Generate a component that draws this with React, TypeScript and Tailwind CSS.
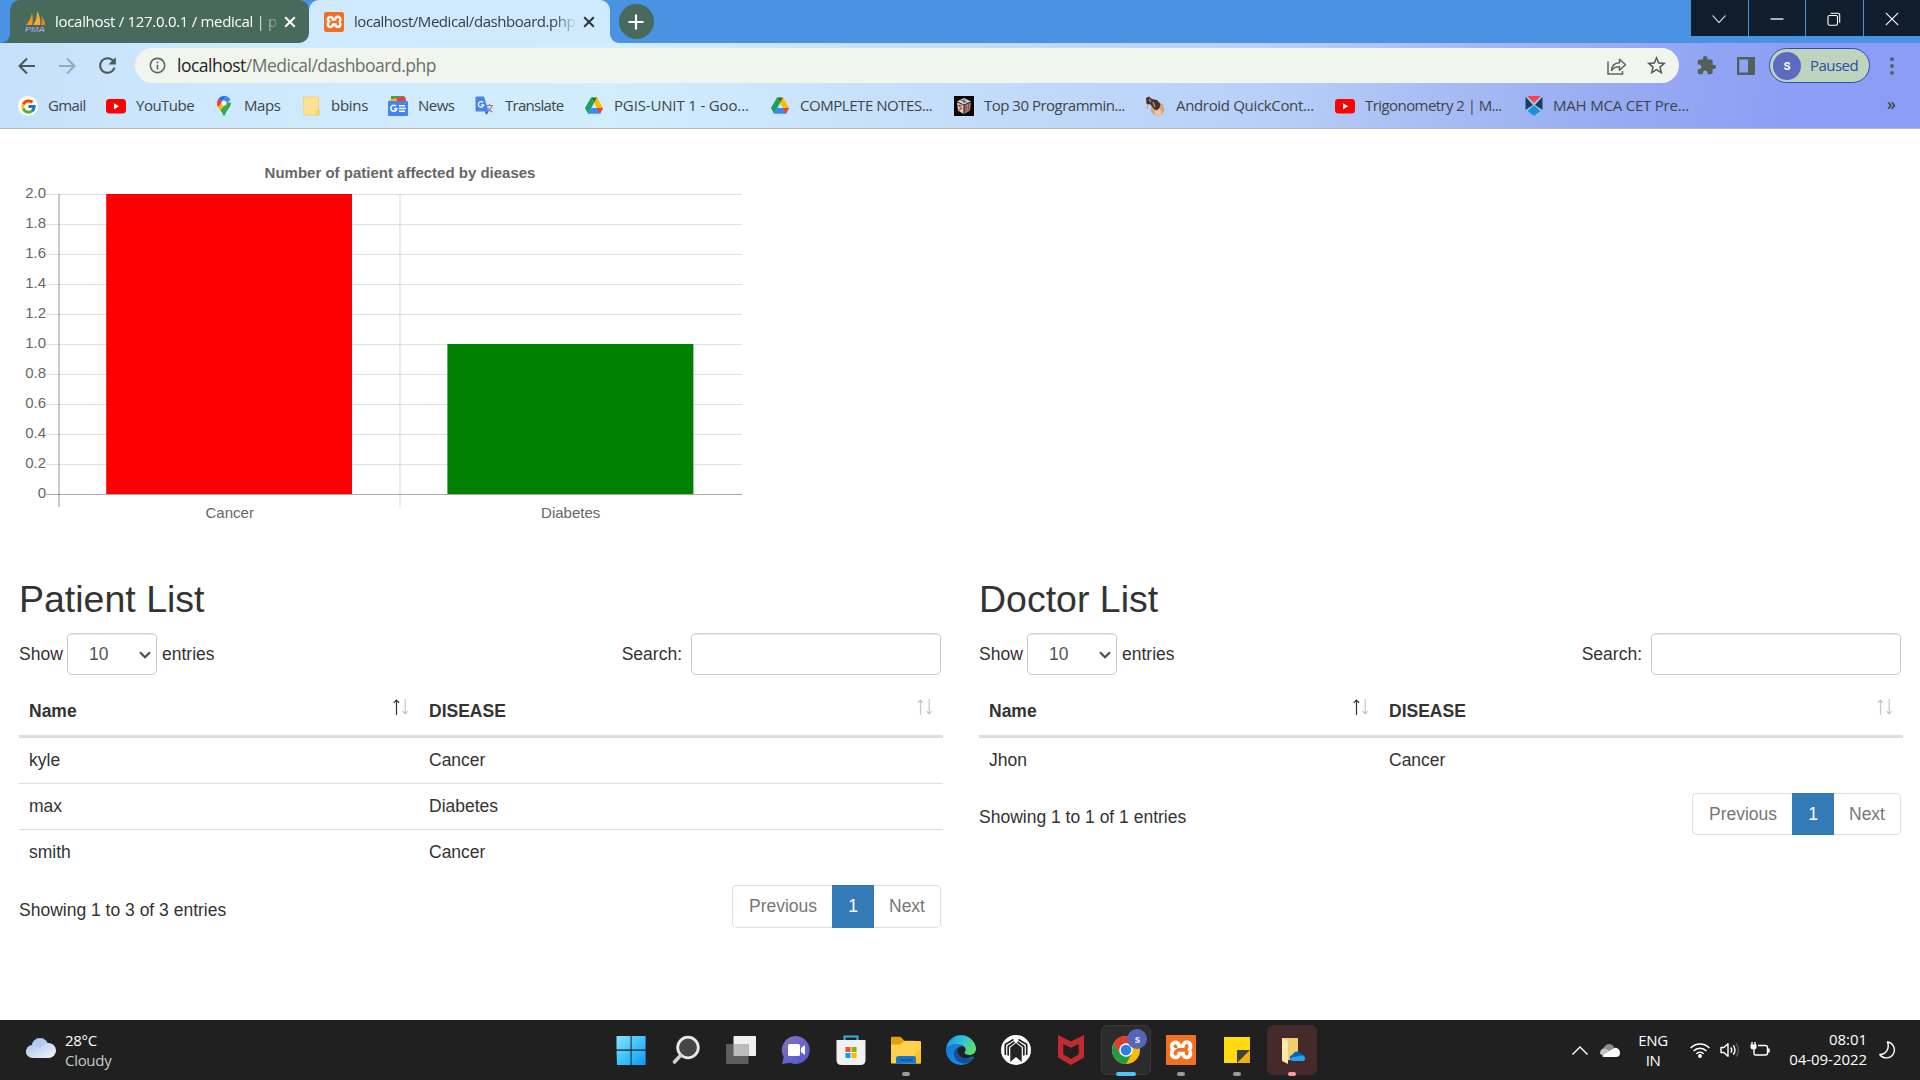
import React from "react";
import { FcGoogle } from "react-icons/fc";
import { SiXampp } from "react-icons/si";
import { MdExtension, MdStarOutline, MdRefresh, MdInfoOutline } from "react-icons/md";

type Row = [string, string];

/* ---------- favicons ---------- */

const Xampp = ({ cls }: { cls: string }) => (
  <span className={`${cls} flex shrink-0 items-center justify-center overflow-hidden rounded-[2px] bg-white`}>
    <SiXampp className="h-full w-full scale-[1.03] text-[#f37021]" />
  </span>
);

const PmaIcon = () => (
  <svg viewBox="0 0 21 21" className="h-[21px] w-[21px] shrink-0">
    <path d="M1 14C4 11 6 7 7 2c1 4 1 8 0 12z" fill="#f7941d" />
    <path d="M8 14C11 10 12 6 12 0c3 5 4 10 3 14z" fill="#f9a63a" />
    <path d="M16 14c1-3 1-6 0-9 3 3 4 6 4 9z" fill="#e58a1c" />
    <text x="0" y="20.5" fontFamily="Liberation Sans" fontSize="8" fontWeight="bold" fontStyle="italic" fill="#dfe3f5" stroke="#4b5187" strokeWidth="0.4" textLength="20" lengthAdjust="spacingAndGlyphs">PMA</text>
  </svg>
);

const GoogleIcon = () => (
  <span className="flex h-5 w-5 items-center justify-center rounded-full bg-white">
    <FcGoogle className="h-[17px] w-[17px]" />
  </span>
);

const YouTubeIcon = () => (
  <svg viewBox="0 0 20 20" className="h-5 w-5">
    <rect x="0" y="3" width="20" height="14.4" rx="3.4" fill="#f00" />
    <path d="M8 7.2v6l5.2-3z" fill="#fff" />
  </svg>
);

const MapsIcon = () => (
  <svg viewBox="0 0 20 20" className="h-5 w-5">
    <path d="M10 20c-.8 0-.9-1.6-2-3.500C6.500 14 3 11 3 7l7 0 7-.5c0 4.500-3.500 7-5 10-1 2-1.200 3.500-2 3.500z" fill="#34a853" />
    <path d="M4.600 2.500 9 6.200 4.200 11C3.400 9.800 3 8.500 3 7c0-1.800.6-3.400 1.600-4.500z" fill="#ea4335" />
    <path d="M4.600 2.500C6 .8 8 0 10 0c.8 0 1.500.1 2.200.3L7.700 5.500z" fill="#1a73e8" />
    <path d="M12.200.3C14 .9 15.500 2.100 16.300 3.800l-4.500 5L8 5.200z" fill="#4285f4" />
    <path d="M11.700 8.800 6.300 14.300C5.500 13.200 4.700 12.200 4.100 11l4-4.700z" fill="#fbbc04" />
    <circle cx="10" cy="7" r="2.600" fill="#fff" />
  </svg>
);

const FolderMark = () => (
  <svg viewBox="0 0 20 20" className="h-5 w-5">
    <path d="M2.500 1h15v12.500l.8 1V19h-15.500z" fill="#fde293" stroke="#f4cf66" strokeWidth="0.8" />
    <path d="M15 14.500h3V19h-3z" fill="#fbd768" stroke="#efc85a" strokeWidth="0.6" />
  </svg>
);

const NewsIcon = () => (
  <svg viewBox="0 0 20 20" className="h-5 w-5">
    <path d="M3 0h13v8H3z" fill="#34a853" />
    <path d="M5 2l12-1.500L19 8H6z" fill="#ea4335" />
    <path d="M1 4l7-2 2 5-8 2z" fill="#fbbc04" />
    <rect y="5" width="20" height="15" rx="1" fill="#4285f4" />
    <path d="M8 10.200a3 3 0 1 0 .8 2.600H6.200" fill="none" stroke="#fff" strokeWidth="1.600" />
    <path d="M11 9.800h6M11 12.500h7M11 15.200h6" stroke="#fff" strokeWidth="1.400" />
  </svg>
);

const TranslateIcon = () => (
  <svg viewBox="0 0 20 20" className="h-5 w-5">
    <path d="M7 5h11.500q1 0 1 1v12q0 1-1 1H12z" fill="#dfe5ee" />
    <path d="M11 9.500h7M14.500 8v1.500M17 9.500c-.6 3-2.500 5-5 6.500M12.500 11.500c1 2 2.500 3.500 4.800 4.600" stroke="#6f87a8" strokeWidth="1.100" fill="none" />
    <path d="M1.500.5H9l4.500 15H1.500q-1 0-1-1v-13q0-1 1-1z" fill="#4a86e8" />
    <path d="M8 6.500a2.700 2.700 0 1 0 .7 2.400H6.200" fill="none" stroke="#fff" strokeWidth="1.200" />
    <path d="M9.500 15.500h4L11.500 19z" fill="#3467c8" />
  </svg>
);

const DriveIcon = () => (
  <svg viewBox="0 0 20 20" className="h-5 w-5">
    <path d="M7 1.500 1 12l3 5.800L10 7z" fill="#1aa15f" />
    <path d="M13 1.500 19 12h-6L7 1.500z" fill="#ffba00" />
    <path d="M7 1.500h6L10 6.800z" fill="#188038" />
    <path d="M7 12h12l-3 5.800H4z" fill="#4285f4" />
    <path d="M13 12h6l-3 5.800z" fill="#ea4335" />
  </svg>
);

const CubeIcon = () => (
  <svg viewBox="0 0 20 20" className="h-5 w-5">
    <rect width="20" height="20" fill="#080808" />
    <path d="M3 5.500 10 2l7 3.500-7 3z" fill="#d7d3cf" />
    <path d="M3 6.500 9.500 9v9L4 14.500z" fill="#d8cfc8" />
    <path d="M17 6.500 10.500 9v9L16 14.500z" fill="#8b8783" />
    <path d="M8 9.200 4.700 9.500l3 3-3 1.500M12 9.500v6M14.500 8v6" stroke="#c43d1f" strokeWidth="1.100" fill="none" />
    <path d="M7 4.200l6 2M10 3v4" stroke="#444" strokeWidth="0.900" />
  </svg>
);

const AndroidPic = () => (
  <svg viewBox="0 0 20 20" className="-ml-px mr-px h-5 w-5">
    <circle cx="12.500" cy="13" r="6.800" fill="#d5a27e" />
    <circle cx="13" cy="16" r="3.500" fill="#e9c7a6" />
    <path d="M1 2 4 .5l3 2.500 5 1 3.500 4-1 4-3 2.500-3-2-3-4L1.500 8z" fill="#4a3028" />
    <path d="M4 3l2 3M8 6l2 5M3 8l-1 5" stroke="#b9a299" strokeWidth="1.200" />
  </svg>
);

const CetIcon = () => (
  <svg viewBox="0 0 20 20" className="ml-px -mr-px h-5 w-5">
    <path d="M1.500 0h17v13.500L10 20l-8.500-6.500z" fill="#a9c6ee" />
    <path d="M3 0h14l-7 7z" fill="#fc4350" />
    <path d="M1.500.8 9 9l-7.500 5zM18.500.8 11 9l7.500 5z" fill="#123f66" />
    <path d="M10 9.300 16.500 15 10 20 3.500 15z" fill="#1b8fe0" />
  </svg>
);

/* ---------- browser chrome ---------- */

const bookmarks: { w: string; icon: React.ReactNode; text: string; ls: string }[] = [
  { w: "w-[88px]", icon: <GoogleIcon />, text: "Gmail", ls: "tracking-[-0.6px]" },
  { w: "w-[108px]", icon: <YouTubeIcon />, text: "YouTube", ls: "tracking-[-0.5px]" },
  { w: "w-[87px]", icon: <MapsIcon />, text: "Maps", ls: "tracking-[-0.4px]" },
  { w: "w-[87px]", icon: <FolderMark />, text: "bbins", ls: "tracking-[-0.3px]" },
  { w: "w-[87px]", icon: <NewsIcon />, text: "News", ls: "tracking-[-0.5px]" },
  { w: "w-[109px]", icon: <TranslateIcon />, text: "Translate", ls: "tracking-[-0.72px]" },
  { w: "w-[186px]", icon: <DriveIcon />, text: "PGIS-UNIT 1 - Goo...", ls: "tracking-[-0.15px]" },
  { w: "w-[184px]", icon: <DriveIcon />, text: "COMPLETE NOTES...", ls: "tracking-[-0.45px]" },
  { w: "w-[192px]", icon: <CubeIcon />, text: "Top 30 Programmin...", ls: "tracking-[-0.5px]" },
  { w: "w-[189px]", icon: <AndroidPic />, text: "Android QuickCont...", ls: "tracking-[-0.33px]" },
  { w: "w-[188px]", icon: <YouTubeIcon />, text: "Trigonometry 2 | M...", ls: "tracking-[-0.57px]" },
  { w: "w-[180px]", icon: <CetIcon />, text: "MAH MCA CET Pre...", ls: "tracking-[-0.2px]" },
];

const Cross = ({ cls }: { cls: string }) => (
  <svg viewBox="0 0 12 12" className={`h-3 w-3 shrink-0 ${cls}`} fill="none" stroke="currentColor" strokeWidth="2">
    <path d="M1.200 1.200l9.600 9.600M10.800 1.200 1.200 10.800" />
  </svg>
);

const WindowButton = ({ w, children }: { w: string; children: React.ReactNode }) => (
  <div className={`${w} flex h-9 items-center justify-center bg-[#0f1d2c]`}>
    <svg viewBox="0 0 14 14" className="mr-px mt-px h-[14px] w-[14px]" fill="none" stroke="#fff" strokeWidth="1.100">
      {children}
    </svg>
  </div>
);

const TabBar = () => (
  <div className="flex h-[43px] bg-[#4a92e2]">
    <div className="w-[10px] shrink-0 bg-[#476a5c]">
      <div className="h-full rounded-br-[9px] bg-[#4a92e2]" />
    </div>
    <div className="w-[299px] shrink-0 bg-[#d0eafd]">
      <div className="flex h-full items-center bg-[#4a92e2] [clip-path:inset(0_0_0_0_round_0_0_10px_0)]">
        <div className="flex h-full w-full items-center rounded-t-[10px] rounded-br-[10px] bg-[#476a5c] pl-[15px]">
          <PmaIcon />
          <span className="ml-[9px] w-[222px] whitespace-nowrap pb-px text-[15px] tracking-[-0.3px] text-white [mask-image:linear-gradient(to_right,#000_200px,transparent_228px)]">
            localhost / 127.0.0.1 / medical | p
          </span>
          <Cross cls="ml-[7px] text-white" />
        </div>
      </div>
    </div>
    <div className="flex w-[301px] shrink-0 items-center rounded-t-[10px] bg-[#d0eafd] pl-[15px]">
      <Xampp cls="h-5 w-5" />
      <span className="ml-[10px] w-[224px] whitespace-nowrap pb-px text-[15px] tracking-[-0.45px] text-[#33404a] [mask-image:linear-gradient(to_right,#000_200px,transparent_224px)]">
        localhost/Medical/dashboard.php
      </span>
      <Cross cls="ml-[5px] text-[#2b353b]" />
    </div>
    <div className="w-[9px] shrink-0 bg-[#d0eafd]">
      <div className="h-full rounded-bl-[9px] bg-[#4a92e2]" />
    </div>
    <div className="mt-1 flex h-[35px] w-[35px] items-center justify-center rounded-full bg-[#476a5c]">
      <svg viewBox="0 0 16 16" className="mr-px h-4 w-4" stroke="#fff" strokeWidth="2.200">
        <path d="M8 .5v15M.5 8h15" />
      </svg>
    </div>
    <div className="ml-auto flex gap-px">
      <WindowButton w="w-[57px]"><path d="M.5 3.500 7 10.500l6.500-7" /></WindowButton>
      <WindowButton w="w-[56px]"><path d="M.5 7h13" strokeWidth="1.300" /></WindowButton>
      <WindowButton w="w-[57px]">
        <rect x="1" y="3.500" width="9.500" height="9.700" rx="1.500" />
        <path d="M3.500 1.300h7.200q2 0 2 2v7.500" />
      </WindowButton>
      <WindowButton w="w-[56px]"><path d="M.8.8l12.400 12.400M13.200.8.8 13.200" /></WindowButton>
    </div>
  </div>
);

const Toolbar = () => (
  <div className="h-[86px] border-b border-[#b2bda4] bg-[linear-gradient(97deg,#c6e0fb_0%,#cee9fd_12%,#d2eefd_32%,#cce6fc_40%,#c2dbf9_52%,#b8d0f8_66%,#a9bef4_74%,#97abf3_84%,#8b9df4_94%,#8b9df5_100%)]">
    <div className="flex h-[45px] items-center">
      <svg viewBox="0 0 18 18" className="ml-[18px] h-[18px] w-[18px]" fill="none" stroke="#4c5a55" strokeWidth="2">
        <path d="M17 9H2M9 1.500 1.500 9 9 16.500" />
      </svg>
      <svg viewBox="0 0 18 18" className="ml-[22px] h-[18px] w-[18px]" fill="none" stroke="#93aab8" strokeWidth="2">
        <path d="M1 9h15M9 1.500 16.500 9 9 16.500" />
      </svg>
      <MdRefresh className="ml-[19px] h-[25px] w-[25px] text-[#4c5a55]" />
      <div className="ml-[15px] flex h-[35px] w-[1544px] items-center rounded-full bg-[#f2f5ee]">
        <MdInfoOutline className="ml-[13px] h-[19px] w-[19px] text-[#5d6463]" />
        <span className="ml-[10px] text-[17.5px] tracking-[-0.5px] text-[#6a706d]">
          <span className="text-[#1f2424]">localhost</span>/Medical/dashboard.php
        </span>
        <svg viewBox="0 0 20 18" className="ml-auto h-[18px] w-[20px]" fill="none" stroke="#5f6563" strokeWidth="1.500">
          <path d="M1 4.500V17h14.500v-3" />
          <path d="M4.500 13.500c.3-5 3-7.500 8-7.700V2.200l6 5.600-6 5.400V9.800c-3.700 0-6.300 1.200-8 3.700z" strokeLinejoin="round" />
        </svg>
        <MdStarOutline className="ml-[18px] mr-[11px] h-[23px] w-[23px] text-[#565c5a]" />
      </div>
      <MdExtension className="ml-[17px] h-[21px] w-[21px] text-[#52605a]" />
      <svg viewBox="0 0 18 18" className="ml-[20px] h-[18px] w-[18px]">
        <path d="M0 0h18v18H0zM2.300 2.500v13H11v-13z" fill="#52605a" fillRule="evenodd" />
      </svg>
      <div className="ml-[14px] flex h-[35px] w-[101px] items-center rounded-full border-[1.500px] border-[#2454a8] bg-[#c0d3be] pl-[3px]">
        <span className="flex h-[28px] w-[28px] items-center justify-center rounded-full bg-[#5c6bc0] font-['Roboto'] text-[14px] font-medium text-white">s</span>
        <span className="ml-[9px] pb-px text-[15px] tracking-[-0.55px] text-[#2850a0]">Paused</span>
      </div>
      <svg viewBox="0 0 4 18" className="ml-[20px] h-[18px] w-1" fill="#52605a">
        <circle cx="2" cy="2.200" r="1.900" />
        <circle cx="2" cy="9" r="1.900" />
        <circle cx="2" cy="15.800" r="1.900" />
      </svg>
    </div>
    <div className="flex h-[36px] items-center pl-[18px] text-[15px] text-[#3d4548]">
      {bookmarks.map((b) => (
        <div key={b.text} className={`${b.w} flex shrink-0 items-center gap-[10px] whitespace-nowrap`}>
          {b.icon}
          <span className={`${b.ls} pb-[2px]`}>{b.text}</span>
        </div>
      ))}
      <span className="ml-auto mr-[24px] -mt-1 text-[16px] font-semibold">»</span>
    </div>
  </div>
);

/* ---------- chart ---------- */

const ticks = ["2.0", "1.8", "1.6", "1.4", "1.2", "1.0", "0.8", "0.6", "0.4", "0.2", "0"];

const Chart = () => (
  <svg viewBox="0 129 960 449" className="block h-[449px] w-[960px]" fontFamily="Liberation Sans, Arial, sans-serif" fontSize="15" fill="#666">
    <text x="400" y="178" textAnchor="middle" fontWeight="bold">Number of patient affected by dieases</text>
    {ticks.map((t, i) => (
      <g key={t}>
        <text x="46" y={198 + i * 30} textAnchor="end">{t}</text>
        <rect x="46" y={194 + i * 30} width="696" height="1" fill={i === 10 ? "#a8a8a8" : "#e1e1e1"} />
      </g>
    ))}
    <rect x="58.300" y="194" width="1.500" height="313" fill="#000" fillOpacity="0.28" />
    <rect x="399.200" y="194" width="1.500" height="313" fill="#000" fillOpacity="0.1" />
    <rect x="106.200" y="194" width="245.800" height="300" fill="#f00" />
    <rect x="447.400" y="344" width="246" height="150" fill="#008000" />
    <text x="229.700" y="518" textAnchor="middle">Cancer</text>
    <text x="570.700" y="518" textAnchor="middle">Diabetes</text>
  </svg>
);

/* ---------- data tables ---------- */

const SortIcon = ({ active }: { active?: boolean }) => (
  <svg viewBox="0 0 16 16" className="-mt-[9px] h-4 w-4" fill="none" strokeWidth="1.200">
    <path d="M3.500 16V1M.8 3.800 3.500 1l2.700 2.800" stroke={active ? "#333" : "#c4c4c4"} />
    <path d="M12.200 0v15M9.500 12.200l2.700 2.800 2.700-2.800" stroke="#c4c4c4" />
  </svg>
);

const DataTable = ({ title, rows }: { title: string; rows: Row[] }) => (
  <section className="w-[960px] pl-[19px] pr-[17px] text-[17.5px] leading-[25px] text-[#333]">
    <h2 className="h-[41px] pt-px text-[37.5px] leading-[41px]">{title}</h2>
    <div className="mt-[14px] flex h-[42px] items-center pr-[2px]">
      <span className="w-[48px]">Show</span>
      <div className="flex h-[42px] w-[90px] items-center rounded-[5px] border border-[#ccc] pl-[21px] text-[#555] shadow-[inset_0_1px_1px_rgba(0,0,0,0.075)]">
        10
        <svg viewBox="0 0 12 8" className="ml-auto mr-[5px] mt-px h-2 w-3" fill="none" stroke="#4a4a4a" strokeWidth="2.200">
          <path d="M1 1.200l5 5 5-5" />
        </svg>
      </div>
      <span className="ml-[5px]">entries</span>
      <span className="ml-auto">Search:</span>
      <div className="ml-[9px] h-[42px] w-[250px] rounded-[5px] border border-[#ccc] shadow-[inset_0_1px_1px_rgba(0,0,0,0.075)]" />
    </div>
    <div className="mt-[13px] flex h-[50px] border-b-[3px] border-[#ddd] pt-[11px] font-bold">
      <div className="flex w-[400px] items-center justify-between self-start pl-[10px] pr-[10px]">
        Name <SortIcon active />
      </div>
      <div className="flex flex-1 items-center justify-between self-start pl-[10px] pr-[10px]">
        DISEASE <SortIcon />
      </div>
    </div>
    {rows.map(([name, disease], i) => (
      <div key={name} className={i < rows.length - 1 ? "flex h-[46px] border-b border-[#ddd] pt-[10px]" : "flex h-[45px] pt-[10px]"}>
        <div className="w-[400px] pl-[10px]">{name}</div>
        <div className="pl-[10px]">{disease}</div>
      </div>
    ))}
    <div className="mt-[10px] flex justify-between pr-[2px]">
      <span className={rows.length > 1 ? "pt-[13px]" : "pt-[12px]"}>{`Showing 1 to ${rows.length} of ${rows.length} entries`}</span>
      <div className={`${rows.length > 1 ? "h-[43px]" : "h-[42px]"} flex w-[209px] text-[#777]`}>
        <span className="flex w-[100px] items-center rounded-l-[5px] border border-r-0 border-[#ddd] pl-[16px]">Previous</span>
        <span className="flex w-[42px] items-center justify-center bg-[#337ab7] text-white">1</span>
        <span className="flex w-[67px] items-center rounded-r-[5px] border border-l-0 border-[#ddd] pl-[15px]">Next</span>
      </div>
    </div>
  </section>
);

/* ---------- taskbar ---------- */

const icon30 = "h-[30px] w-[30px]";

const StartIcon = () => (
  <svg viewBox="0 0 30 30" className={icon30}>
    <defs>
      <linearGradient id="win" x1="0" y1="0" x2="1" y2="1">
        <stop offset="0" stopColor="#8be3ff" />
        <stop offset="0.500" stopColor="#3fc2fb" />
        <stop offset="1" stopColor="#0f97fb" />
      </linearGradient>
    </defs>
    <path d="M1 1h13.600v13.600H.5V1.500zM15.600 1h14v13.600h-14zM.5 15.700h14.100V30H1zM15.600 15.700h14V30h-14z" fill="url(#win)" />
  </svg>
);

const SearchIcon = () => (
  <svg viewBox="0 0 30 30" className={icon30}>
    <circle cx="17" cy="12.500" r="10.300" fill="#454545" stroke="#e6e8ea" strokeWidth="2.800" />
    <path d="M9.500 20.500 3.500 27" stroke="#cfd2d4" strokeWidth="3.600" strokeLinecap="round" />
  </svg>
);

const TaskViewIcon = () => (
  <svg viewBox="0 0 30 30" className={icon30}>
    <rect x="7.500" y="1" width="22.500" height="20" rx="1" fill="#f0f0f0" />
    <rect x="0" y="9" width="22.500" height="20" rx="1" fill="#5e5e5e" />
    <rect x="7.500" y="9" width="15" height="12" fill="#bcbcbc" />
  </svg>
);

const ChatIcon = () => (
  <svg viewBox="0 0 30 30" className={icon30}>
    <defs>
      <linearGradient id="chat" x1="0" y1="0" x2="0.800" y2="1">
        <stop offset="0" stopColor="#8f72b8" />
        <stop offset="0.550" stopColor="#6a64cb" />
        <stop offset="1" stopColor="#4f5fd0" />
      </linearGradient>
    </defs>
    <path d="M15 1a14 14 0 1 1-6 26.800L1 29l1.800-7A14 14 0 0 1 15 1z" fill="url(#chat)" />
    <rect x="7" y="9" width="12" height="12" rx="1.500" fill="#fff" />
    <path d="M20 13l4-3v10l-4-3z" fill="#fff" />
  </svg>
);

const StoreIcon = () => (
  <svg viewBox="0 0 30 30" className={icon30}>
    <path d="M8.500 7V1.500h13V7" fill="none" stroke="#2fb4ec" strokeWidth="2" />
    <path d="M.5 5h29v20q0 5-5 5h-19q-5 0-5-5z" fill="#f1f1f1" />
    <path d="M9.500 12h5v5h-5z" fill="#f25022" />
    <path d="M15.600 12h5v5h-5z" fill="#7fba00" />
    <path d="M9.500 18h5v5h-5z" fill="#00a4ef" />
    <path d="M15.600 18h5v5h-5z" fill="#ffb900" />
  </svg>
);

const ExplorerIcon = () => (
  <svg viewBox="0 0 30 30" className={icon30}>
    <path d="M0 3q0-1.200 1-1.200h8.500l4 4H24v6H0z" fill="#e3a008" />
    <path d="M0 9.500h9l4-3.500h16q1 0 1 1v20.500q0 1-1 1H1q-1 0-1-1z" fill="#ffd04d" />
    <path d="M30 14v13.500q0 1-1 1H14z" fill="#fcc127" />
    <path d="M5 28.500v-5q0-2.500 2.500-2.500h15q2.500 0 2.500 2.500v5z" fill="#1579cf" />
    <path d="M9 25h12.500" stroke="#0b559c" strokeWidth="1.400" />
  </svg>
);

const EdgeIcon = () => (
  <svg viewBox="0 0 30 30" className={icon30}>
    <defs>
      <linearGradient id="edgeTop" x1="0" y1="0.300" x2="1" y2="0.600">
        <stop offset="0" stopColor="#2196e3" />
        <stop offset="0.500" stopColor="#30c3d8" />
        <stop offset="1" stopColor="#63e05a" />
      </linearGradient>
      <linearGradient id="edgeBody" x1="0" y1="0" x2="0.600" y2="1">
        <stop offset="0" stopColor="#1a6fc9" />
        <stop offset="1" stopColor="#1592e0" />
      </linearGradient>
    </defs>
    <circle cx="15" cy="15" r="15" fill="url(#edgeBody)" />
    <path d="M.5 12A15 15 0 0 1 30 13.500c0 4-3 6.500-6.500 6.500-3 0-5-1-5-2.200 0-.8 1-1.300 1-3.300 0-2.500-3-5.500-8-5.500C6 9 2 10.500.5 12z" fill="url(#edgeTop)" />
    <path d="M11 13c-3 2-4 6-2 10s7 6.500 13 5c3-1.500 5-3.500 6-6-2 1.200-4.500 1.700-7 1.300C15 22.500 11 18.500 11 13z" fill="#134f9c" />
    <path d="M18.500 12c-3-1.500-6-.5-7.200 1.800-.6 3 1 6.200 4.200 8.200 2.500 1.200 5.500 1.600 8 .8l3.500-1.300 1.500 1.300 1.500-3.500V15c-1 4-4 5-6.500 5-3 0-5.200-.9-5-2.200.1-.8 1-1.300 1-3 0-1-.4-2-1-2.800z" fill="#202020" />
  </svg>
);

const HoodIcon = () => (
  <svg viewBox="0 0 30 30" className={icon30}>
    <circle cx="15" cy="15" r="15" fill="#fff" />
    <g fill="none" stroke="#222" strokeWidth="1.700">
      <path d="M12.500 4.500 4.300 9.500v10.500M17.500 4.500l8.200 5v10.500" />
      <path d="M7.200 20.500v-9L13.500 7M22.800 20.500v-9L16.500 7" />
    </g>
    <path d="M9.300 12.500 15 8l5.700 4.500V27L15 22l-5.700 5z" fill="#242424" />
  </svg>
);

const McAfeeIcon = () => (
  <svg viewBox="0 0 30 30" className={icon30}>
    <path d="M2 0l13 6.500L28 0v22.500L15 30 2 22.500z" fill="#c22a31" />
    <path d="M7.300 9 15 12.800 22.700 9v10.200L15 24l-7.700-4.800z" fill="#202020" />
  </svg>
);

const ChromeIcon = () => (
  <span className="relative block h-[50px] w-[50px] rounded-md border border-[#383838] bg-[#2c2c2c]">
    <svg viewBox="0 0 28 28" className="absolute left-[10px] top-[10px] h-[28px] w-[28px]">
      <circle cx="14" cy="14" r="14" fill="#fbbc05" />
      <path d="M1.900 7A14 14 0 0 0 14 28l6-10.500H8z" fill="#229a45" />
      <path d="M14 7.500h12.400A14 14 0 0 0 1.900 7l6 10.500z" fill="#e33b2e" />
      <circle cx="14" cy="14" r="6.800" fill="#fff" />
      <circle cx="14" cy="14" r="5.300" fill="#2f7de9" />
    </svg>
    <span className="absolute left-[25px] top-[3px] flex h-5 w-5 items-center justify-center rounded-full bg-[#5765b8] pb-px text-[11px] font-bold text-[#dfe2f5]">s</span>
  </span>
);

const NotesIcon = () => (
  <svg viewBox="0 0 30 30" className={icon30}>
    <path d="M2 2h26v14l-12 12H2z" fill="#ffda10" />
    <path d="M28 15v13H15z" fill="#f0b010" />
    <path d="M15 15h13L15 28z" fill="#404040" />
  </svg>
);

const CloudFolderIcon = () => (
  <span className="flex h-[50px] w-[50px] items-center justify-center rounded-md border border-[#472c2e] bg-[#45292b]">
    <svg viewBox="0 0 30 30" className={icon30}>
      <path d="M5 3h16v22H5z" fill="#f0cd6d" />
      <path d="M5 3l6 3v23l-6-3z" fill="#fde9a9" />
      <path d="M15 25.500c-3-1-3-5 .5-5.700C17 16 22 15 24 19c4 0 5.500 4 3 6.500z" fill="#0a62b8" />
      <path d="M13.500 24c1-1.500 3-2.500 5-2l5.500-1.500c4 0 5.500 4.500 2.500 5.500h-10c-2 0-3-.7-3-2z" fill="#27a4ec" />
    </svg>
  </span>
);

const apps: { icon: React.ReactNode; mark?: string }[] = [
  { icon: <StartIcon /> },
  { icon: <SearchIcon /> },
  { icon: <TaskViewIcon /> },
  { icon: <ChatIcon /> },
  { icon: <StoreIcon /> },
  { icon: <ExplorerIcon />, mark: "w-2 bg-[#9a9a9a]" },
  { icon: <EdgeIcon /> },
  { icon: <HoodIcon /> },
  { icon: <McAfeeIcon /> },
  { icon: <ChromeIcon />, mark: "w-5 bg-[#4cc2ff]" },
  { icon: <Xampp cls="h-[30px] w-[30px]" />, mark: "w-2 bg-[#9a9a9a]" },
  { icon: <NotesIcon />, mark: "w-2 bg-[#9a9a9a]" },
  { icon: <CloudFolderIcon />, mark: "w-2 bg-[#ff99a4]" },
];

const Taskbar = () => (
  <footer className="flex h-[60px] items-center bg-[#202020] text-[15px] leading-[20px] text-white">
    <div className="flex w-[603px] items-center pl-[26px]">
      <svg viewBox="0 0 30 20" className="-mt-1 h-5 w-[30px]">
        <defs>
          <linearGradient id="cloud" x1="0" y1="0" x2="1" y2="1">
            <stop offset="0" stopColor="#a9c4ee" />
            <stop offset="1" stopColor="#f2f5fa" />
          </linearGradient>
        </defs>
        <circle cx="14" cy="8.500" r="8.500" fill="#b3caf0" />
        <path d="M6.500 20a6.500 6.500 0 1 1 3-12.200c2 .8 3.500 2 4.500 3.500C16 6.500 19 5 22 5a7.500 7.500 0 0 1 1 15z" fill="url(#cloud)" />
      </svg>
      <div className="ml-[9px] pb-px tracking-[-0.3px]">
        <div>28°C</div>
        <div className="text-[#c9c9c9]">Cloudy</div>
      </div>
    </div>
    <div className="flex">
      {apps.map((a, i) => (
        <div key={i} className="relative flex h-[60px] w-[55.100px] items-center justify-center">
          {a.icon}
          {a.mark && (
            <span className="absolute inset-x-0 bottom-1 flex justify-center">
              <span className={`${a.mark} h-1 rounded-full`} />
            </span>
          )}
        </div>
      ))}
    </div>
    <div className="ml-auto flex items-center pr-[24px]">
      <svg viewBox="0 0 16 9" className="h-[9px] w-4" fill="none" stroke="#fff" strokeWidth="1.400"><path d="M.5 8.500 8 1l7.500 7.500" /></svg>
      <svg viewBox="0 0 20 14" className="ml-[12px] h-[14px] w-5">
        <path d="M3 8C3 2 10-2 14 4l-4 5z" fill="#8d8d8d" />
        <path d="M0 10c0-4 4-6 7-3.500L15 12H4q-4 0-4-2z" fill="#c4c4c4" />
        <path d="M2 13 13 5.500C16 3.500 20 6 20 10c0 3-2 4-4 4H4.500Q3 14 2 13z" fill="#fff" />
      </svg>
      <div className="ml-[18px] w-[30px] pb-px text-center tracking-[-0.4px]">
        <div>ENG</div>
        <div>IN</div>
      </div>
      <svg viewBox="0 0 20 16" className="ml-[22px] h-4 w-5" fill="none" stroke="#fff" strokeWidth="1.500">
        <path d="M.6 6a13 13 0 0 1 18.800 0M3.500 9a9 9 0 0 1 13 0M6.300 11.800a5.200 5.200 0 0 1 7.400 0" />
        <circle cx="10" cy="14" r="1.200" fill="#fff" />
      </svg>
      <svg viewBox="0 0 20 16" className="ml-[10px] h-4 w-5" fill="none" stroke="#fff" strokeWidth="1.400">
        <path d="M1 5.500h2.800L8 1.800v12.400L3.800 10.500H1z" strokeLinejoin="round" />
        <path d="M10.800 5.500a4 4 0 0 1 0 5M13.200 3.500a6.500 6.500 0 0 1 0 9" />
        <path d="M16 1.500a10 10 0 0 1 0 13" stroke="#5c5c5c" />
      </svg>
      <svg viewBox="0 0 20 16" className="ml-[10px] h-4 w-5" fill="none" stroke="#fff" strokeWidth="1.400">
        <path d="M8 3.500h7.500q2 0 2 2v5.500q0 2-2 2H5.500q-1.500 0-1.500-1.500V7" />
        <path d="M18.800 6.500v4" strokeWidth="1.800" />
        <path d="M.5 2.500h6V5Q6.500 7.500 3.500 7.500T.5 5z" fill="#fff" stroke="none" />
        <path d="M2 0v3M5 0v3" />
      </svg>
      <div className="ml-[16px] w-[81px] whitespace-nowrap pb-[2px] text-right tracking-[-0.05px]">
        <div>08:01</div>
        <div>04-09-2022</div>
      </div>
      <svg viewBox="0 0 17 18" className="ml-[12px] h-[18px] w-[17px]" fill="none" stroke="#fff" strokeWidth="1.400">
        <path d="M8.500 1a8 8 0 1 1-7.700 12.500C6.500 13.500 11 8 8.500 1z" strokeLinejoin="round" />
      </svg>
    </div>
  </footer>
);

export default function App() {
  return (
    <div className="flex h-[1080px] w-[1920px] flex-col overflow-hidden bg-white font-['Open_Sans','Noto_Sans',sans-serif]">
      <header>
        <TabBar />
        <Toolbar />
      </header>
      <main className="flex-1 font-['Liberation_Sans',Arial,sans-serif]">
        <Chart />
        <div className="flex">
          <DataTable title="Patient List" rows={[["kyle", "Cancer"], ["max", "Diabetes"], ["smith", "Cancer"]]} />
          <DataTable title="Doctor List" rows={[["Jhon", "Cancer"]]} />
        </div>
      </main>
      <Taskbar />
    </div>
  );
}
